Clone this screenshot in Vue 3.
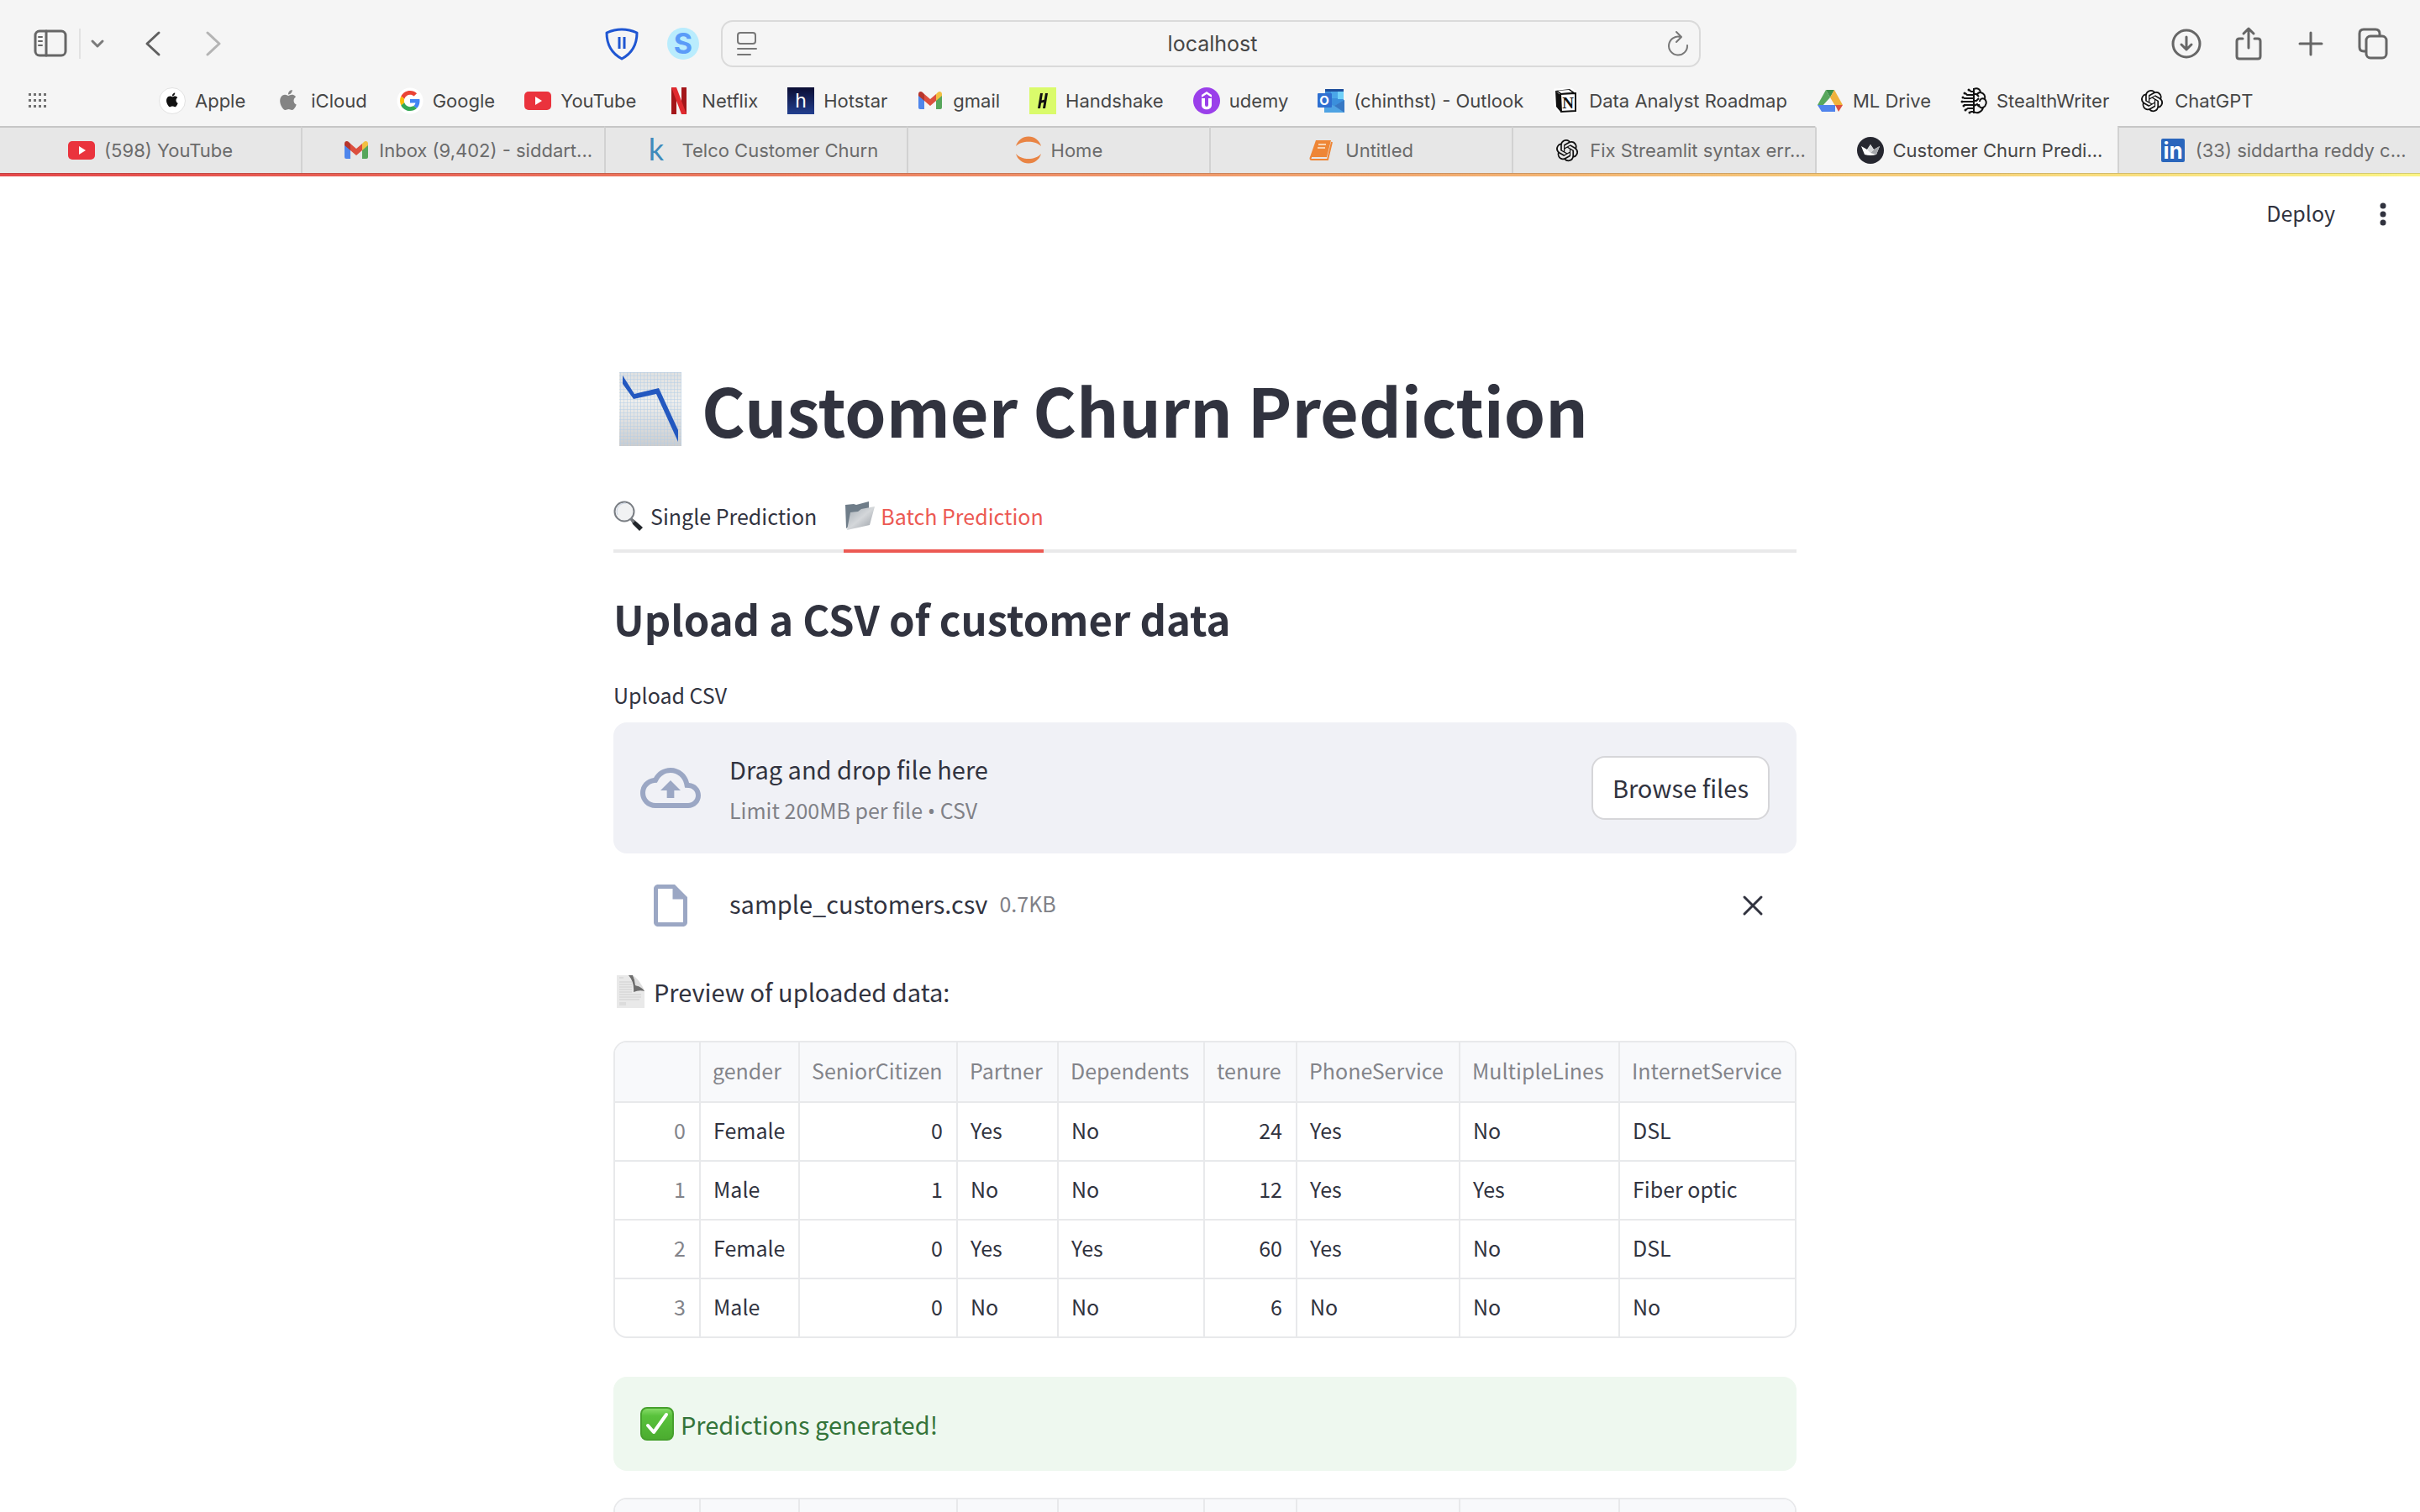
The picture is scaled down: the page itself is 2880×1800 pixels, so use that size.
<script setup>
const appleMark =
  'M12.152 6.896c-.948 0-2.415-1.078-3.96-1.04-2.04.027-3.91 1.183-4.961 3.014-2.117 3.675-.546 9.103 1.519 12.09 1.013 1.454 2.208 3.09 3.792 3.039 1.52-.065 2.09-.987 3.935-.987 1.831 0 2.35.987 3.96.948 1.637-.026 2.676-1.48 3.676-2.948 1.156-1.688 1.636-3.325 1.662-3.415-.039-.013-3.182-1.221-3.22-4.857-.026-3.04 2.48-4.494 2.597-4.559-1.429-2.09-3.623-2.324-4.39-2.376-2-.156-3.675 1.09-4.61 1.09zM15.53 3.83c.843-1.012 1.4-2.427 1.245-3.83-1.207.052-2.662.805-3.532 1.818-.78.896-1.454 2.338-1.273 3.714 1.338.104 2.715-.688 3.559-1.701'
const knotMark =
  'M22.2819 9.8211a5.9847 5.9847 0 0 0-.5157-4.9108 6.0462 6.0462 0 0 0-6.5098-2.9A6.0651 6.0651 0 0 0 4.9807 4.1818a5.9847 5.9847 0 0 0-3.9977 2.9 6.0462 6.0462 0 0 0 .7427 7.0966 5.98 5.98 0 0 0 .511 4.9107 6.051 6.051 0 0 0 6.5146 2.9001A5.9847 5.9847 0 0 0 13.2599 24a6.0557 6.0557 0 0 0 5.7718-4.2058 5.9894 5.9894 0 0 0 3.9977-2.9001 6.0557 6.0557 0 0 0-.7475-7.0729zm-9.022 12.6081a4.4755 4.4755 0 0 1-2.8764-1.0408l.1419-.0804 4.7783-2.7582a.7948.7948 0 0 0 .3927-.6813v-6.7369l2.02 1.1686a.071.071 0 0 1 .038.052v5.5826a4.504 4.504 0 0 1-4.4945 4.4944zm-9.6607-4.1254a4.4708 4.4708 0 0 1-.5346-3.0137l.142.0852 4.783 2.7582a.7712.7712 0 0 0 .7806 0l5.8428-3.3685v2.3324a.0804.0804 0 0 1-.0332.0615L9.74 19.9502a4.4992 4.4992 0 0 1-6.1408-1.6464zM2.3408 7.8956a4.485 4.485 0 0 1 2.3655-1.9728V11.6a.7664.7664 0 0 0 .3879.6765l5.8144 3.3543-2.0201 1.1685a.0757.0757 0 0 1-.071 0l-4.8303-2.7865A4.504 4.504 0 0 1 2.3408 7.872zm16.5963 3.8558L13.1038 8.364 15.1192 7.2a.0757.0757 0 0 1 .071 0l4.8303 2.7913a4.4944 4.4944 0 0 1-.6765 8.1042v-5.6772a.79.79 0 0 0-.407-.667zm2.0107-3.0231l-.142-.0852-4.7735-2.7818a.7759.7759 0 0 0-.7854 0L9.409 9.2297V6.8974a.0662.0662 0 0 1 .0284-.0615l4.8303-2.7866a4.4992 4.4992 0 0 1 6.6802 4.66zM8.3065 12.863l-2.02-1.1638a.0804.0804 0 0 1-.038-.0567V6.0742a4.4992 4.4992 0 0 1 7.3757-3.4537l-.142.0805L8.704 5.459a.7948.7948 0 0 0-.3927.6813zm1.0976-2.3654l2.602-1.4998 2.6069 1.4998v2.9994l-2.5974 1.4997-2.6067-1.4997Z'

// Site icons, each drawn on a 32 x 32 canvas.
const icons = {
  apple: `<circle cx="16" cy="16" r="15.5" fill="#fff" stroke="#e2e2e2"/><path transform="translate(7.500 6.500) scale(.7)" fill="#111" d="${appleMark}"/>`,
  icloud: `<path transform="translate(4 3)" fill="#848484" d="${appleMark}"/>`,
  google: `<circle cx="16" cy="16" r="15.500" fill="#fff"/><g transform="translate(4 4) scale(.5)"><path fill="#ea4335" d="M24 9.500c3.540 0 6.710 1.220 9.210 3.600l6.850-6.850C35.900 2.380 30.470 0 24 0 14.620 0 6.510 5.380 2.560 13.220l7.980 6.190C12.430 13.720 17.740 9.500 24 9.500z"/><path fill="#4285f4" d="M46.980 24.550c0-1.570-.15-3.090-.38-4.550H24v9.020h12.940c-.58 2.960-2.260 5.480-4.780 7.180l7.730 6c4.510-4.180 7.090-10.360 7.090-17.650z"/><path fill="#fbbc05" d="M10.530 28.590c-.48-1.450-.76-2.990-.76-4.590s.27-3.140.76-4.590l-7.980-6.190C.92 16.460 0 20.120 0 24c0 3.880.92 7.540 2.560 10.780l7.970-6.190z"/><path fill="#34a853" d="M24 48c6.480 0 11.930-2.130 15.890-5.810l-7.730-6c-2.150 1.450-4.920 2.300-8.160 2.300-6.260 0-11.570-4.220-13.470-9.910l-7.980 6.190C6.510 42.620 14.620 48 24 48z"/></g>`,
  youtube: `<rect y="5" width="32" height="22" rx="5" fill="#ea333d"/><path d="M13 11v10l8-5z" fill="#fff"/>`,
  netflix: `<path d="M7 0h6v32h-6z" fill="#a4161a"/><path d="M19 0h6v32h-6z" fill="#a4161a"/><path d="M7 0h6l12 32h-6z" fill="#e02a2f"/>`,
  hotstar: `<defs><linearGradient id="hs" x2="0" y2="1"><stop stop-color="#0b0d33"/><stop offset="1" stop-color="#223f8f"/></linearGradient></defs><rect width="32" height="32" fill="url(#hs)"/><text x="16" y="24" text-anchor="middle" font-family="Inter, sans-serif" font-size="23" fill="#fff">h</text>`,
  gmail: `<path d="M2 8v16a2 2 0 0 0 2 2h5V14z" fill="#4f86ec"/><path d="M30 8v16a2 2 0 0 1-2 2h-5V14z" fill="#57a65c"/><path d="M9 8l7 6 7-6v8l-7 6-7-6z" fill="#dc4f3e"/><path d="M2 8c0-3 3-4 5-2l2 2v8l-7-6z" fill="#b7352c"/><path d="M30 8c0-3-3-4-5-2l-2 2v8l7-6z" fill="#f2bf42"/>`,
  handshake: `<rect width="32" height="32" fill="#dafb6b"/><path d="M13 7h3l-3 18h-3zM19 7h3l-3 18h-3zM13 16l7-2v3l-7 2z" fill="#111"/>`,
  udemy: `<circle cx="16" cy="16" r="16" fill="#9a3fea"/><path d="M10 9l6-4 6 4v3l-6-4-6 4zM10 13h4v8a2 2 0 0 0 4 0v-8h4v8c0 7-12 7-12 0z" fill="#fff"/>`,
  outlook: `<rect x="9" y="2" width="22" height="20" fill="#3b8fdc"/><rect x="9" y="2" width="22" height="3" fill="#1f4f9c"/><rect x="16" y="5" width="8" height="8" fill="#4aa6e8"/><rect x="24" y="5" width="7" height="9" fill="#6fd0f8"/><path d="M8 18l12 4 12-7v15H8z" fill="#4fa3e3"/><path d="M20 22l12 8V15z" fill="#3778c4"/><rect y="7" width="17" height="17" rx="1" fill="#2f6fd0"/><text x="8" y="21" text-anchor="middle" font-family="Inter, sans-serif" font-size="15" font-weight="700" fill="#fff">O</text>`,
  notion: `<path d="M3 3l19-1 6 5v22l-18 1-7-7z" fill="#fff" stroke="#fff" stroke-width="3"/><path d="M3 4l17-2 7 5-18 1zM3 4l6 5v20l-5-6z" fill="#111"/><path d="M6 4l13-1 4 3-13 1z" fill="#fff"/><path d="M9 8l18-1v21l-17 1z" fill="#fff" stroke="#111" stroke-width="2"/><text x="18" y="25" text-anchor="middle" font-family="Liberation Serif, serif" font-size="19" font-weight="700" fill="#111">N</text>`,
  drive: `<path d="M11 3h10l-5 9z" fill="#3f8f49"/><path d="M11 3L1 21l5 2 10-11z" fill="#58a75c"/><path d="M21 3l10 18-9 1-6-10z" fill="#f0b23c"/><path d="M1 21h21v8H6z" fill="#4f83ec"/><path d="M22 21h9l-5 8z" fill="#dc5040"/>`,
  stealth: `<g fill="none" stroke="#111" stroke-width="2"><path d="M16 1v30M16 2c5-2 8 1 8 4 4 1 6 4 5 8 3 3 2 8-2 10-1 5-7 8-11 5"/><path d="M16 8h3l3 3M24 6c-3 0-4 2-4 4M29 14c-3-2-6 0-6 3M16 16h3l3-3M16 22l4-2 2 3M27 24c-3 1-5-1-5-4"/><path d="M16 5h-3l-3-2M16 9H8L6 7M16 13H4M16 17H2M16 21H4M16 25H9l-3 2M16 29h-4"/></g><g fill="#111"><circle cx="10" cy="3" r="1.500"/><circle cx="5" cy="7" r="1.500"/><circle cx="3" cy="12" r="1.500"/><circle cx="2" cy="17" r="1.500"/><circle cx="4" cy="22" r="1.500"/><circle cx="6" cy="27" r="1.500"/><circle cx="11" cy="30" r="1.500"/></g>`,
  knot: `<path transform="translate(3 3) scale(1.090)" fill="#111" d="${knotMark}"/>`,
  kaggle: `<text x="12" y="28" text-anchor="middle" font-family="Lato, sans-serif" font-size="36" fill="#3f8abb">k</text>`,
  jupyter: `<path d="M1 11a15.500 15.500 0 0 1 30 0c-7-7-23-7-30 0zM1 20a15.500 15.500 0 0 0 30 0c-7 8-23 8-30 0z" fill="#e98444"/>`,
  notebook: `<path d="M8 4h18l-5 20H1z" fill="#ee8636"/><path d="M27 6l-5 21H3c-2 0-2-3 0-3" fill="none" stroke="#ee8636" stroke-width="2"/><path d="M11 9h9M10 13h9" stroke="#f9d3b1" stroke-width="2"/>`,
  crown: `<circle cx="16" cy="16" r="16" fill="#262730"/><path d="M5 11l7 4 4-6 4 6 7-4-4 10q-7 2-14 0z" fill="#fff"/><path d="M27 11l-4 10-7-2 4-4z" fill="#a3a5aa"/><path d="M16 9l4 6-4 4-4-4z" fill="#d5d6d9"/>`,
  linkedin: `<rect x="2" y="2" width="28" height="28" rx="2" fill="#2a66bc"/><text x="16" y="26" text-anchor="middle" font-family="Inter, sans-serif" font-size="26" font-weight="700" fill="#fff">in</text>`,
}

const bookmarks = [
  ['apple', 'Apple'],
  ['icloud', 'iCloud'],
  ['google', 'Google'],
  ['youtube', 'YouTube'],
  ['netflix', 'Netflix'],
  ['hotstar', 'Hotstar'],
  ['gmail', 'gmail'],
  ['handshake', 'Handshake'],
  ['udemy', 'udemy'],
  ['outlook', '(chinthst) - Outlook'],
  ['notion', 'Data Analyst Roadmap'],
  ['drive', 'ML Drive'],
  ['stealth', 'StealthWriter'],
  ['knot', 'ChatGPT'],
]

const browserTabs = [
  { icon: 'youtube', title: '(598) YouTube' },
  { icon: 'gmail', title: 'Inbox (9,402) - siddart...' },
  { icon: 'kaggle', title: 'Telco Customer Churn' },
  { icon: 'jupyter', title: 'Home' },
  { icon: 'notebook', title: 'Untitled' },
  { icon: 'knot', title: 'Fix Streamlit syntax err...' },
  { icon: 'crown', title: 'Customer Churn Predi...', active: true },
  { icon: 'linkedin', title: '(33) siddartha reddy c...' },
]

const columns = [
  { name: 'gender', width: 118 },
  { name: 'SeniorCitizen', width: 188, numeric: true },
  { name: 'Partner', width: 120 },
  { name: 'Dependents', width: 174 },
  { name: 'tenure', width: 110, numeric: true },
  { name: 'PhoneService', width: 194 },
  { name: 'MultipleLines', width: 190 },
  { name: 'InternetService', width: 210 },
]

const rows = [
  ['Female', 0, 'Yes', 'No', 24, 'Yes', 'No', 'DSL'],
  ['Male', 1, 'No', 'No', 12, 'Yes', 'Yes', 'Fiber optic'],
  ['Female', 0, 'Yes', 'Yes', 60, 'Yes', 'No', 'DSL'],
  ['Male', 0, 'No', 'No', 6, 'No', 'No', 'No'],
]
</script>

<template>
  <div class="window">
    <header class="chrome">
      <div class="toolbar">
        <div class="side side-left">
          <button class="tool" aria-label="Sidebar">
            <svg width="40" height="34" viewBox="0 0 40 34" fill="none" stroke="#666" stroke-width="3" stroke-linecap="round">
              <rect x="2" y="2" width="36" height="29" rx="5" />
              <path d="M15 2v29" />
              <path d="M6 9h4M6 14h4M6 19h4" stroke-width="2" />
            </svg>
          </button>
          <span class="divider"></span>
          <button class="tool" aria-label="Tab groups">
            <svg width="16" height="12" viewBox="0 0 16 12" fill="none" stroke="#7a7a7a" stroke-width="3" stroke-linecap="round" stroke-linejoin="round"><path d="M2 3l6 6 6-6" /></svg>
          </button>
          <button class="tool back" aria-label="Back">
            <svg width="20" height="32" viewBox="0 0 20 32" fill="none" stroke="#606060" stroke-width="3" stroke-linecap="round" stroke-linejoin="round"><path d="M17 3L3 16l14 13" /></svg>
          </button>
          <button class="tool forward" aria-label="Forward">
            <svg width="20" height="32" viewBox="0 0 20 32" fill="none" stroke="#b4b4b4" stroke-width="3" stroke-linecap="round" stroke-linejoin="round"><path d="M3 3l14 13L3 29" /></svg>
          </button>
          <span class="spring"></span>
          <button class="tool" aria-label="Tracker shield">
            <svg width="40" height="40" viewBox="0 0 40 40" fill="none" stroke="#1f56d2" stroke-width="3" stroke-linejoin="round">
              <path d="M2 7Q20-1 38 7c0 14-5 24-18 31C7 31 2 21 2 7z" />
              <path d="M17 12v14M23 12v14" />
            </svg>
          </button>
          <button class="tool s-badge" aria-label="Extension">
            <svg width="38" height="38" viewBox="0 0 38 38">
              <circle cx="19" cy="19" r="19" fill="#b9ecfd" />
              <text x="19" y="31" text-anchor="middle" font-family="Inter, sans-serif" font-size="34" font-weight="700" fill="#5b9bf8">S</text>
            </svg>
          </button>
        </div>

        <div class="address">
          <svg width="26" height="30" viewBox="0 0 26 30" fill="none" stroke="#777" stroke-width="2" stroke-linecap="round">
            <rect x="2" y="2" width="21" height="13" rx="3" />
            <path d="M2 21h22M2 28h15" />
          </svg>
          <input class="address-input" type="text" value="localhost" aria-label="Address" />
          <button class="tool" aria-label="Reload">
            <svg width="26" height="30" viewBox="0 0 26 30" fill="none" stroke="#777" stroke-width="2" stroke-linecap="round" stroke-linejoin="round">
              <path d="M16 7a11 11 0 1 0 8 10M11 1l6 6-6 6" />
            </svg>
          </button>
        </div>

        <div class="side side-right">
          <button class="tool" aria-label="Downloads">
            <svg width="36" height="40" viewBox="0 0 36 40" fill="none" stroke="#666" stroke-width="3" stroke-linecap="round" stroke-linejoin="round">
              <circle cx="18" cy="20" r="16" />
              <path d="M18 12v15M12 21l6 6 6-6" />
            </svg>
          </button>
          <button class="tool" aria-label="Share">
            <svg width="36" height="40" viewBox="0 0 36 40" fill="none" stroke="#666" stroke-width="3" stroke-linecap="round" stroke-linejoin="round">
              <path d="M11 14H7q-3 0-3 3v18q0 3 3 3h22q3 0 3-3V17q0-3-3-3h-4M18 25V3M12 8l6-6 6 6" />
            </svg>
          </button>
          <button class="tool" aria-label="New tab">
            <svg width="36" height="40" viewBox="0 0 36 40" fill="none" stroke="#666" stroke-width="3" stroke-linecap="round"><path d="M18 7v26M5 20h26" /></svg>
          </button>
          <button class="tool" aria-label="Tab overview">
            <svg width="36" height="40" viewBox="0 0 36 40" fill="none" stroke="#666" stroke-width="3">
              <rect x="10" y="11" width="24" height="26" rx="5" />
              <path d="M10 29H7q-5 0-5-5V8q0-5 5-5h14q5 0 5 5v3" />
            </svg>
          </button>
        </div>
      </div>

      <nav class="bookmarks" aria-label="Bookmarks">
        <svg class="apps" width="24" height="18" viewBox="0 0 24 18" fill="#707070">
          <template v-for="r in 3" :key="r">
            <rect v-for="c in 4" :key="c" :x="(c - 1) * 6" :y="(r - 1) * 7" width="3" height="3" />
          </template>
        </svg>
        <a v-for="[icon, label] in bookmarks" :key="label" class="bookmark" href="#">
          <svg class="favicon" viewBox="0 0 32 32" v-html="icons[icon]"></svg>
          <span>{{ label }}</span>
        </a>
      </nav>

      <nav class="browser-tabs" aria-label="Open tabs">
        <a v-for="tab in browserTabs" :key="tab.title" class="browser-tab" :class="{ active: tab.active }" href="#">
          <svg class="favicon" viewBox="0 0 32 32" v-html="icons[tab.icon]"></svg>
          <span class="tab-title">{{ tab.title }}</span>
        </a>
      </nav>
    </header>

    <div class="decoration"></div>

    <div class="app">
      <div class="app-header">
        <button class="deploy">Deploy</button>
        <button class="tool" aria-label="Menu">
          <svg width="8" height="28" viewBox="0 0 8 28" fill="#31333f"><circle cx="4" cy="4" r="3.500" /><circle cx="4" cy="14" r="3.500" /><circle cx="4" cy="24" r="3.500" /></svg>
        </button>
      </div>

      <main class="content">
        <h1 class="title">
          <svg width="88" height="88" viewBox="0 0 88 88" aria-hidden="true">
            <defs>
              <pattern id="grid" width="4" height="4" patternUnits="userSpaceOnUse">
                <path d="M0 0h4M0 0v4" stroke="#b3cde6" stroke-width="1" fill="none" />
              </pattern>
              <linearGradient id="paper" x2="0" y2="1"><stop stop-color="#dfe0e0" /><stop offset=".4" stop-color="#eeeeed" /><stop offset="1" stop-color="#cccdce" /></linearGradient>
            </defs>
            <rect x="7" width="74" height="88" fill="url(#paper)" />
            <rect x="7" width="74" height="88" fill="url(#grid)" />
            <path d="M11 4l14 22 29-7 23 50v14L51 26l-27 6-13-18z" fill="#2358c0" />
          </svg>
          <span>Customer Churn Prediction</span>
        </h1>

        <div class="tabs" role="tablist">
          <button class="tab" role="tab" aria-selected="false">
            <svg width="36" height="36" viewBox="0 0 36 36" aria-hidden="true">
              <path d="M22 21l4 3 9 8-4 4-8-8-2-5z" fill="#22262b" />
              <path d="M20 20l6 4-3 3-4-5z" fill="#777b80" />
              <circle cx="13" cy="13" r="11.500" fill="#f1f2f3" stroke="#7a7e84" stroke-width="2" />
              <path d="M5 17A10 10 0 0 1 15 3" fill="none" stroke="#c9d3e2" stroke-width="1" />
            </svg>
            <span>Single Prediction</span>
          </button>
          <button class="tab selected" role="tab" aria-selected="true">
            <svg width="36" height="36" viewBox="0 0 36 36" aria-hidden="true">
              <defs><linearGradient id="flap" x1="0" y1="0" x2="1" y2="1"><stop stop-color="#a5adb5" /><stop offset=".5" stop-color="#d4d7da" /><stop offset="1" stop-color="#969ca3" /></linearGradient></defs>
              <path d="M2 5l10-1 3 1 15-4v14L3 33z" fill="#6f7d89" />
              <path d="M8 14l9-1 4-3 16-3-6 22L4 35z" fill="url(#flap)" />
            </svg>
            <span>Batch Prediction</span>
          </button>
        </div>

        <h2 class="subtitle">Upload a CSV of customer data</h2>

        <label class="field-label" for="browse">Upload CSV</label>
        <section class="dropzone">
          <svg width="72" height="72" viewBox="0 0 24 24" fill="#9ba7c4" aria-hidden="true">
            <path d="M19.350 10.040C18.670 6.590 15.640 4 12 4 9.110 4 6.600 5.640 5.350 8.040 2.340 8.360 0 10.910 0 14c0 3.310 2.690 6 6 6h13c2.760 0 5-2.240 5-5 0-2.640-2.050-4.780-4.650-4.960zM19 18H6c-2.210 0-4-1.790-4-4 0-2.050 1.530-3.760 3.560-3.970l1.070-.11.5-.95C8.080 7.140 9.940 6 12 6c2.620 0 4.880 1.860 5.390 4.430l.3 1.500 1.530.11c1.560.1 2.780 1.410 2.780 2.960 0 1.650-1.350 3-3 3zM8 13h2.550v3h2.900v-3H16l-4-4z" />
          </svg>
          <div class="drop-text">
            <span class="body-text">Drag and drop file here</span>
            <small class="small-text">Limit 200MB per file <span class="bullet">•</span> CSV</small>
          </div>
          <button id="browse" class="browse">Browse files</button>
        </section>

        <div class="file">
          <span class="file-icon">
            <svg width="60" height="60" viewBox="0 0 24 24" fill="#9ba7c4" aria-hidden="true">
              <path d="M6 2c-1.100 0-1.990.9-1.990 2L4 20c0 1.100.89 2 1.990 2H18c1.100 0 2-.9 2-2V8l-6-6H6zm0 18V4h7v5h5v11H6z" />
            </svg>
          </span>
          <div class="file-text">
            <span class="body-text">sample_customers.csv</span>
            <small class="small-text">0.7KB</small>
          </div>
          <button class="tool" aria-label="Remove file">
            <svg width="24" height="24" viewBox="0 0 24 24" stroke="#31333f" stroke-width="3" stroke-linecap="round"><path d="M2 2l20 20M22 2L2 22" /></svg>
          </button>
        </div>

        <p class="preview body-text">
          <svg width="40" height="40" viewBox="0 0 40 40" aria-hidden="true">
            <path d="M4 1h19l14 19v20H4z" fill="#e9e9e9" />
            <path d="M7 4h5M7 9h15M7 12h15M7 15h15M7 18h15M7 21h15M7 24h26M7 27h26M7 30h24M7 34h8M7 36h8" stroke="#cfcfcf" stroke-width="1" />
            <path d="M18 1h5q3 6 3 12 7 0 11 7-6-2-13 1 1-12-6-20z" fill="#6d6d6d" />
            <path d="M23 1q7 4 14 18-5-5-11-6 0-7-3-12z" fill="#dedede" />
          </svg>
          <span>Preview of uploaded data:</span>
        </p>

        <div class="frame">
          <table class="grid">
            <colgroup>
              <col class="index-col" />
              <col v-for="col in columns" :key="col.name" :style="{ width: col.width + 'px' }" />
            </colgroup>
            <thead>
              <tr>
                <th></th>
                <th v-for="col in columns" :key="col.name">{{ col.name }}</th>
              </tr>
            </thead>
            <tbody>
              <tr v-for="(row, i) in rows" :key="i">
                <td class="index numeric">{{ i }}</td>
                <td v-for="(cell, c) in row" :key="c" :class="{ numeric: columns[c].numeric }">{{ cell }}</td>
              </tr>
            </tbody>
          </table>
        </div>

        <div class="success body-text" role="status">
          <svg width="40" height="40" viewBox="0 0 40 40" aria-hidden="true">
            <defs><linearGradient id="green" x2="0" y2="1"><stop stop-color="#8ade6c" /><stop offset=".25" stop-color="#59c23c" /><stop offset="1" stop-color="#4bab2f" /></linearGradient></defs>
            <rect x="1" y="1" width="38" height="38" rx="7" fill="url(#green)" stroke="#46a02d" stroke-width="2" />
            <path d="M9 22l7 8L31 9" fill="none" stroke="#fff" stroke-width="4" stroke-linecap="round" stroke-linejoin="round" />
          </svg>
          <span>Predictions generated!</span>
        </div>

        <div class="frame">
          <table class="grid">
            <colgroup>
              <col class="index-col" />
              <col v-for="col in columns" :key="col.name" :style="{ width: col.width + 'px' }" />
            </colgroup>
            <thead>
              <tr>
                <th></th>
                <th v-for="col in columns" :key="col.name"></th>
              </tr>
            </thead>
          </table>
        </div>
      </main>
    </div>
  </div>
</template>

<style>
body {
  background: #fff;
}
</style>

<style scoped>
* {
  box-sizing: border-box;
}
.window {
  display: flex;
  flex-direction: column;
  height: 100vh;
  overflow: hidden;
  font-family: "Noto Sans CJK SC", "Noto Sans", sans-serif;
  color: #31333f;
}
svg {
  display: block;
  flex: none;
  overflow: visible;
}
button {
  font: inherit;
  color: inherit;
  cursor: pointer;
}
a {
  color: inherit;
  text-decoration: none;
}
.tool {
  flex: none;
  padding: 0;
  border: 0;
  background: none;
}
.chrome {
  flex: none;
  background: #f5f5f5;
  font-family: Inter, "Liberation Sans", sans-serif;
  font-size: 22px;
  color: #464646;
}
.toolbar {
  display: grid;
  grid-template-columns: minmax(0, 1fr) minmax(0, 1166px) minmax(0, 1fr);
  align-items: center;
  padding: 24px 38px 10px 40px;
}
.side {
  display: flex;
  align-items: center;
}
.side-left {
  padding-right: 26px;
}
.side-right {
  justify-content: flex-end;
  gap: 38px;
}
.divider {
  width: 2px;
  height: 36px;
  margin: 0 12px 0 14px;
  background: #e2e2e2;
}
.back {
  margin-left: 48px;
}
.forward {
  margin-left: 52px;
}
.spring {
  flex: 1;
}
.s-badge {
  margin-left: 34px;
}
.address {
  display: flex;
  align-items: center;
  height: 56px;
  padding: 0 12px 0 16px;
  border: 2px solid #dadada;
  border-radius: 14px;
}
.address-input {
  flex: 1;
  min-width: 0;
  padding: 0;
  border: 0;
  outline: 0;
  background: none;
  font: inherit;
  font-size: 25px;
  text-align: center;
  color: #464646;
}
.bookmarks {
  display: flex;
  align-items: center;
  gap: 35px;
  height: 60px;
  padding-left: 34px;
  white-space: nowrap;
}
.apps {
  margin-right: 96px;
}
.bookmark {
  display: flex;
  align-items: center;
  gap: 11px;
}
.favicon {
  width: 32px;
  height: 32px;
}
.browser-tabs {
  display: flex;
  height: 56px;
}
.browser-tab {
  display: flex;
  flex: 1 1 0;
  align-items: center;
  min-width: 0;
  padding: 0 16px;
  border-top: 2px solid #c6c6c6;
  border-left: 2px solid #d2d2d2;
  background: #e7e7e7;
  color: #6b6b6b;
  white-space: nowrap;
}
.browser-tab::before,
.browser-tab::after {
  content: "";
  flex: 1 1 0;
}
.browser-tab::before {
  min-width: 32px;
}
.browser-tab:first-child {
  border-left: 0;
}
.browser-tab.active {
  border-top-color: #f5f5f5;
  background: #f5f5f5;
  color: #464646;
}
.tab-title {
  margin-left: 11px;
}
.decoration {
  flex: none;
  height: 4px;
  background: linear-gradient(90deg, #e5484a, #f09a6b 50%, #fbf484);
  border-top: 1px solid rgba(0, 0, 0, 0.15);
}
.app {
  flex: 1;
  min-height: 0;
  overflow: hidden;
  padding-right: 12px;
}
.app-header {
  display: flex;
  align-items: center;
  justify-content: flex-end;
  gap: 53px;
  height: 90px;
  padding-right: 28px;
}
.deploy {
  padding: 0 0 4px;
  border: 0;
  background: none;
  font-size: 25px;
  line-height: 42px;
}
.content {
  max-width: 1408px;
  margin: 0 auto;
  padding-top: 134px;
}
.title {
  display: flex;
  align-items: center;
  gap: 17px;
  margin: 0 0 34px;
  font-size: 79px;
  font-weight: 700;
  line-height: 106px;
  white-space: nowrap;
}
.tabs {
  display: flex;
  gap: 32px;
  height: 84px;
  margin-bottom: 44px;
  box-shadow: inset 0 -4px #e9e9ea;
}
.tab {
  display: flex;
  align-items: center;
  gap: 8px;
  padding: 0;
  border: 0;
  border-bottom: 4px solid transparent;
  background: none;
  font-size: 25px;
}
.tab.selected {
  border-bottom-color: #ec5953;
  color: #ec5953;
}
.subtitle {
  margin: 0 0 36px;
  font-size: 49px;
  font-weight: 700;
  line-height: 68px;
}
.field-label {
  display: block;
  margin-bottom: 12px;
  font-size: 25px;
  line-height: 42px;
}
.body-text {
  font-size: 29px;
  line-height: 48px;
}
.small-text {
  font-size: 25px;
  line-height: 42px;
  color: #808187;
}
.bullet {
  font-family: "Open Sans", sans-serif;
}
.dropzone {
  display: flex;
  align-items: center;
  gap: 34px;
  height: 156px;
  padding: 0 32px;
  border-radius: 16px;
  background: #f0f1f6;
}
.drop-text {
  display: flex;
  flex: 1;
  flex-direction: column;
  gap: 4px;
}
.browse {
  height: 76px;
  padding: 0 23px 2px;
  border: 2px solid #d6d6d9;
  border-radius: 16px;
  background: #fff;
  font-size: 29px;
  line-height: 48px;
}
.file {
  display: flex;
  align-items: center;
  gap: 34px;
  height: 60px;
  margin-top: 32px;
  padding: 0 40px 0 32px;
}
.file-icon {
  display: flex;
  justify-content: center;
  width: 72px;
}
.file-text {
  display: flex;
  flex: 1;
  align-items: center;
  gap: 14px;
  padding-bottom: 6px;
}
.preview {
  display: flex;
  align-items: center;
  gap: 8px;
  margin: 48px 0 35px;
}
.frame {
  overflow: hidden;
  border: 2px solid #e8e9eb;
  border-radius: 16px;
}
.grid {
  width: 100%;
  border-collapse: separate;
  border-spacing: 0;
  table-layout: fixed;
  font-size: 25px;
  line-height: 42px;
}
.index-col {
  width: 102px;
}
.grid th,
.grid td {
  height: 70px;
  padding: 0 16px 4px 15px;
  border-right: 2px solid #e8e9eb;
  border-bottom: 2px solid #e8e9eb;
  text-align: left;
  white-space: nowrap;
}
.grid th {
  height: 72px;
  padding-left: 14px;
  background: #f8f9fb;
  font-weight: 400;
  color: #83848a;
}
.grid .numeric {
  text-align: right;
}
.grid th:last-child,
.grid td:last-child {
  border-right: 0;
}
.grid tbody tr:last-child td {
  height: 68px;
  border-bottom: 0;
}
.grid .index {
  color: #83848a;
}
.success {
  display: flex;
  align-items: center;
  gap: 8px;
  height: 112px;
  margin: 46px 0 32px;
  padding: 0 32px;
  border-radius: 16px;
  background: #eef8ef;
  color: #34743a;
}
</style>
